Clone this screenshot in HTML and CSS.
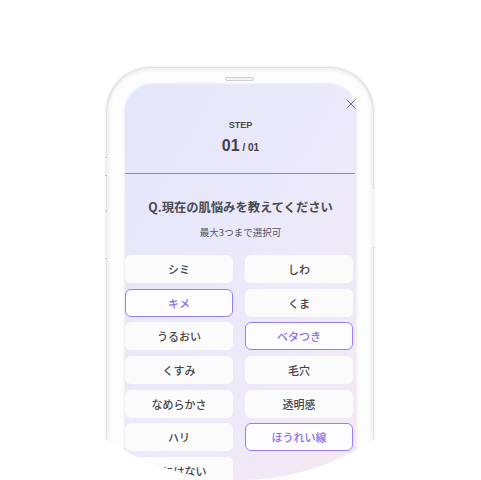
FILE: index.html
```html
<!DOCTYPE html>
<html lang="ja">
<head>
<meta charset="utf-8">
<link rel="stylesheet" href="styles.css">
</head>
<body>
<div class="stage">
  <div class="phone">
    <span class="side side-l1"></span>
    <span class="side side-l2"></span>
    <span class="side side-r1"></span>
    <span class="speaker"></span>
    <div class="screen">
      <button class="close" aria-label="close">
        <svg width="10" height="10" viewBox="0 0 10 10"><path d="M0.5 0.5 L9.5 9.5 M9.5 0.5 L0.5 9.5" stroke="#6d6d72" stroke-width="1" fill="none"/></svg>
      </button>
      <div class="step-label">STEP</div>
      <div class="step-count"><span class="cur">01</span><span class="tot"> / 01</span></div>
      <div class="divider"></div>
      <h2 class="question">Q.現在の肌悩みを教えてください</h2>
      <p class="note">最大3つまで選択可</p>
      <div class="options">
        <div class="opt">シミ</div>
        <div class="opt">しわ</div>
        <div class="opt sel">キメ</div>
        <div class="opt">くま</div>
        <div class="opt">うるおい</div>
        <div class="opt sel">ベタつき</div>
        <div class="opt">くすみ</div>
        <div class="opt">毛穴</div>
        <div class="opt">なめらかさ</div>
        <div class="opt">透明感</div>
        <div class="opt">ハリ</div>
        <div class="opt sel">ほうれい線</div>
        <div class="opt">特にはない</div>
      </div>
    </div>
  </div>
</div>
</body>
</html>
```
FILE: styles.css
```css
* { box-sizing: border-box; }
html, body { margin: 0; padding: 0; background: #ffffff; }
body { width: 481px; height: 480px; overflow: hidden; }

.stage {
  width: 480px;
  height: 480px;
  border-radius: 50%;
  overflow: hidden;
  padding: 68px 0 0 107px;
  background: #ffffff;
}

.phone {
  position: relative;
  width: 266px;
  height: 520px;
  border-radius: 44px;
  background: #fdfdfd;
  padding: 16px 17px 0 18px;
  box-shadow: 0 0 2px 0.5px rgba(0,0,0,0.16), inset 0 0 4px 1px rgba(0,0,0,0.08);
}

.side {
  position: absolute;
  width: 2px;
  background: #f1f1f1;
  border-top: 1px solid #c4c4c4;
  border-bottom: 1px solid #c4c4c4;
}
.side-l1 { left: -2px; top: 89px; height: 19px; }
.side-l2 { left: -2px; top: 143px; height: 48px; }
.side-r1 { right: -2px; top: 120px; height: 60px; border-color: #e0e0e0; background: #f4f4f4; }

.speaker {
  position: absolute;
  left: 118px;
  top: 9px;
  width: 29px;
  height: 4px;
  border-radius: 3px;
  background: #f4f4f4;
  border: 1px solid #cfcfcf;
}

.screen {
  position: relative;
  height: 520px;
  border-radius: 27px 27px 0 0;
  background: linear-gradient(120deg, #e4e6fb 0%, #ebe9fa 45%, #f3e9f5 80%, #f7e8ef 100%);
  box-shadow: 0 0 3px rgba(0,0,0,0.12);
  padding-top: 36px;
  display: flex;
  flex-direction: column;
  align-items: center;
  font-family: "Liberation Sans", Arial, sans-serif;
  color: #454548;
}

.close {
  position: absolute;
  top: 15px;
  right: 0;
  width: 10px;
  height: 10px;
  padding: 0;
  border: 0;
  background: none;
  display: block;
}
.close svg { display: block; }

.step-label {
  font-size: 9px;
  line-height: 11px;
  font-weight: 700;
  color: #48484b;
}

.step-count {
  margin-top: 5px;
  line-height: 19px;
  font-weight: 700;
  color: #404044;
}
.step-count .cur { font-size: 16px; }
.step-count .tot { font-size: 10px; }

.divider {
  align-self: stretch;
  margin-top: 16px;
  height: 1px;
  background: #8d8d96;
  margin-right: 1px;
}

.question {
  margin: 24px 0 0;
  font-family: "Noto Sans CJK JP", "Noto Sans", sans-serif;
  font-size: 12.3px;
  line-height: 18px;
  font-weight: 700;
  color: #4a4a4e;
}

.note {
  margin: 9px 0 0;
  font-family: "Noto Sans CJK JP", "Noto Sans", sans-serif;
  font-size: 9.5px;
  line-height: 14px;
  color: #55555a;
}

.options {
  align-self: stretch;
  margin-top: 16px;
  display: grid;
  grid-template-columns: 108px 108px;
  grid-auto-rows: 28px;
  column-gap: 12px;
  row-gap: 5.7px;
}

.opt {
  display: flex;
  align-items: center;
  justify-content: center;
  border-radius: 6px;
  background: #fbfbfc;
  border: 1.5px solid transparent;
  font-family: "Noto Sans CJK JP", "Noto Sans", sans-serif;
  font-size: 11px;
  font-weight: 500;
  color: #444448;
}

.opt.sel {
  background: #fdfdff;
  border-color: #977ef4;
  color: #8a6cee;
}
```
